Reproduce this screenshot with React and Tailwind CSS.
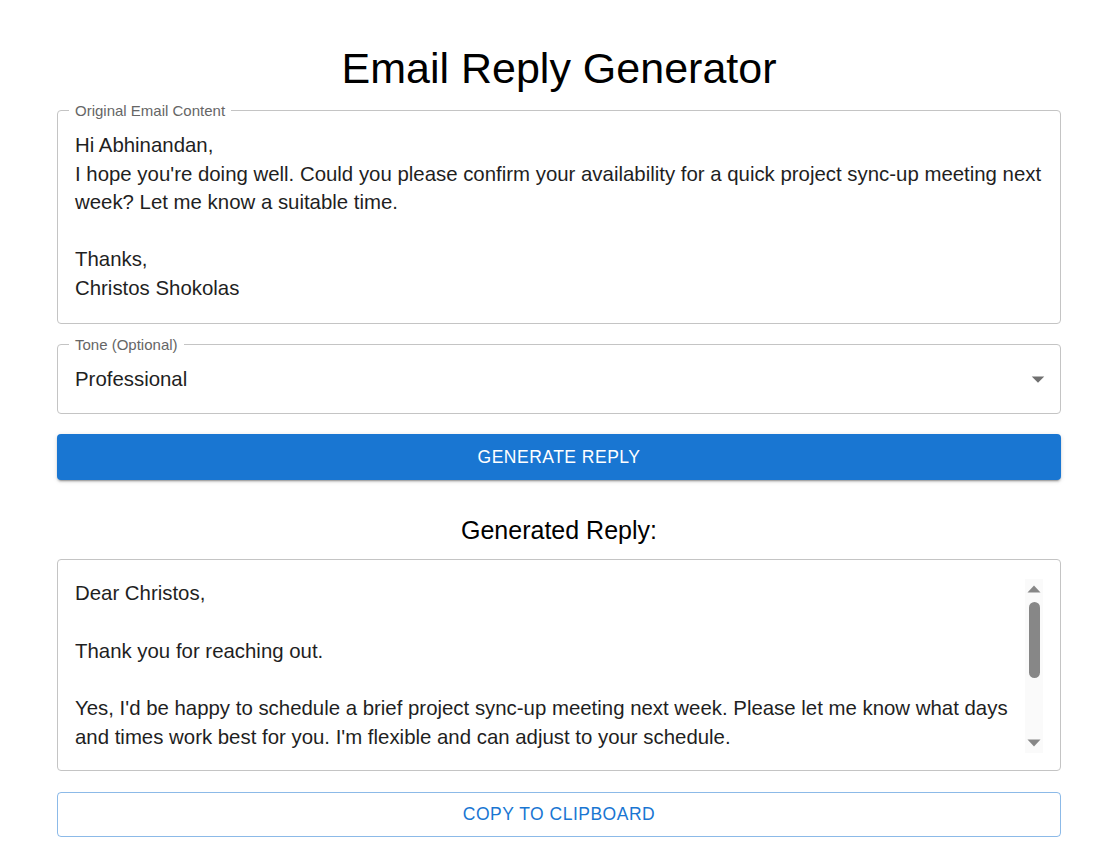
import { useState } from 'react';

const font = { fontFamily: "'Liberation Sans', Arial, sans-serif" };

const originalEmail = `Hi Abhinandan,
I hope you're doing well. Could you please confirm your availability for a quick project sync-up meeting next week? Let me know a suitable time.

Thanks,
Christos Shokolas`;

const generated = `Dear Christos,

Thank you for reaching out.

Yes, I'd be happy to schedule a brief project sync-up meeting next week. Please let me know what days and times work best for you. I'm flexible and can adjust to your schedule.

Looking forward to connecting.

Best regards,
Abhinandan`;

const Scrollbar = () => (
  <div className="w-[18px] h-[174px] bg-[#fafafa] flex flex-col items-center shrink-0">
    <svg width="18" height="18" viewBox="0 0 18 18" className="shrink-0"><path d="M2.5 13.5L9 6.5l6.5 7z" fill="#878787" /></svg>
    <div className="w-[11px] h-[76px] rounded-full bg-[#878787] mt-[5px]" />
    <div className="flex-1" />
    <svg width="18" height="18" viewBox="0 0 18 18" className="shrink-0"><path d="M2.5 4.5L9 11.5l6.5-7z" fill="#878787" /></svg>
  </div>
);

const App = () => {
  const [tone] = useState('Professional');

  return (
    <div className="min-h-screen bg-white text-[#1f1f1f]" style={font}>
      <div className="pl-[57px] pr-[49px] pt-[40px] pb-8">
        <h1 className="text-center text-[43px] leading-[56px] text-black mb-[14px]">Email Reply Generator</h1>

        {/* Original email */}
        <div className="relative border border-[#c4c4c4] rounded-[4px] px-[17px] pt-[20px] pb-[21px]">
          <span className="absolute -top-[9px] left-[11px] bg-white px-[6px] text-[15px] leading-[17px] text-[#666]">Original Email Content</span>
          <div className="whitespace-pre-wrap text-[20.4px] leading-[28.5px]">{originalEmail}</div>
        </div>

        {/* Tone */}
        <div className="relative mt-[20px] border border-[#c4c4c4] rounded-[4px] h-[70px] pl-[17px] pr-[7px] flex items-center justify-between">
          <span className="absolute -top-[9px] left-[11px] bg-white px-[6px] text-[15px] leading-[17px] text-[#666]">Tone (Optional)</span>
          <span className="text-[20.4px]">{tone}</span>
          <svg width="30" height="30" viewBox="0 0 24 24" className="text-[#707070]"><path d="M7 10l5 5 5-5z" fill="currentColor" /></svg>
        </div>

        <button className="mt-[20px] w-full h-[46px] rounded-[4px] bg-[#1976d2] text-white text-[17.5px] tracking-[0.5px] uppercase shadow-[0_3px_1px_-2px_rgba(0,0,0,0.2),0_2px_2px_0_rgba(0,0,0,0.14),0_1px_5px_0_rgba(0,0,0,0.12)]">
          Generate Reply
        </button>

        <h2 className="text-center text-[25px] leading-[32px] text-black mt-[34px] mb-[13px]">Generated Reply:</h2>

        <div className="border border-[#c4c4c4] rounded-[4px] pl-[17px] pr-[17px] pt-[19px] pb-[17px] flex gap-[6px]">
          <textarea
            readOnly
            value={generated}
            className="block flex-1 h-[174px] resize-none outline-none overflow-hidden text-[20.4px] leading-[28.75px] text-[#1f1f1f] bg-transparent"
            style={font}
          />
          <Scrollbar />
        </div>

        <button className="mt-[21px] w-full h-[45px] rounded-[4px] border border-[#1976d2]/50 text-[#1976d2] text-[17.5px] tracking-[0.5px] uppercase">
          Copy to Clipboard
        </button>
      </div>
    </div>
  );
};

export default App;
